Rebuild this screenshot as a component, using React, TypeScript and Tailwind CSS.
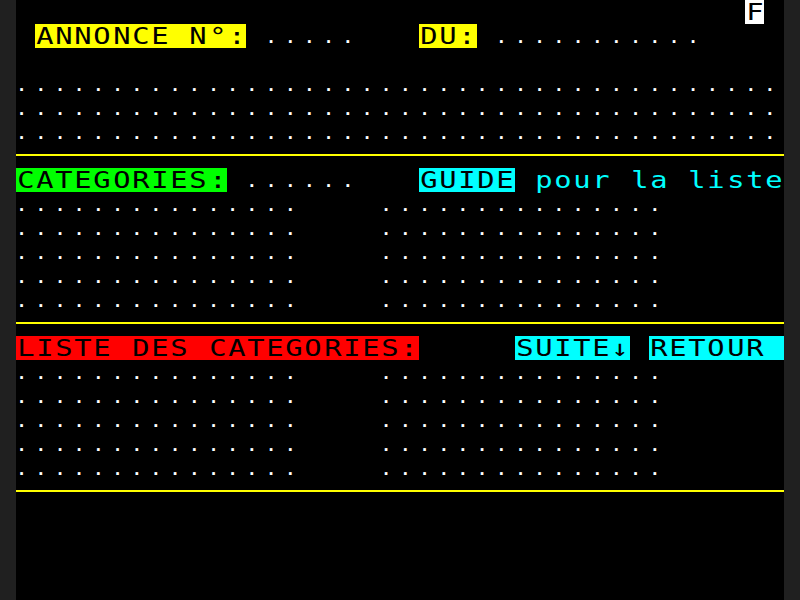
import React from "react"

type Seg = { t: string; fg?: string; bg?: string }

const Y = "bg-[#ffff00]"
const G = "bg-[#00ff00]"
const R = "bg-[#ff0000]"
const C = "bg-[#00ffff]"

const dots = (n: number) => ".".repeat(n)
const sp = (n: number) => " ".repeat(n)

// 25 rows of 40 columns, Minitel style
const rows: (Seg[] | "line")[] = [
  [{ t: sp(38) }, { t: "F", fg: "text-black", bg: "bg-white" }],
  [
    { t: " " },
    { t: "ANNONCE N°:", fg: "text-black", bg: Y },
    { t: " " },
    { t: dots(5) },
    { t: sp(3) },
    { t: "DU:", fg: "text-black", bg: Y },
    { t: " " },
    { t: dots(11) },
  ],
  [],
  [{ t: dots(40) }],
  [{ t: dots(40) }],
  [{ t: dots(40) }],
  "line",
  [
    { t: "CATEGORIES:", fg: "text-black", bg: G },
    { t: " " },
    { t: dots(6) },
    { t: sp(3) },
    { t: "GUIDE", fg: "text-black", bg: C },
    { t: " " },
    { t: "pour la liste", fg: "text-[#00ffff]" },
  ],
  [{ t: dots(15) }, { t: sp(4) }, { t: dots(15) }],
  [{ t: dots(15) }, { t: sp(4) }, { t: dots(15) }],
  [{ t: dots(15) }, { t: sp(4) }, { t: dots(15) }],
  [{ t: dots(15) }, { t: sp(4) }, { t: dots(15) }],
  [{ t: dots(15) }, { t: sp(4) }, { t: dots(15) }],
  "line",
  [
    { t: "LISTE DES CATEGORIES:", fg: "text-black", bg: R },
    { t: sp(5) },
    { t: "SUITE↓", fg: "text-black", bg: C },
    { t: " " },
    { t: "RETOUR ", fg: "text-black", bg: C },
  ],
  [{ t: dots(15) }, { t: sp(4) }, { t: dots(15) }],
  [{ t: dots(15) }, { t: sp(4) }, { t: dots(15) }],
  [{ t: dots(15) }, { t: sp(4) }, { t: dots(15) }],
  [{ t: dots(15) }, { t: sp(4) }, { t: dots(15) }],
  [{ t: dots(15) }, { t: sp(4) }, { t: dots(15) }],
  "line",
  [],
  [],
  [],
  [],
]

function Cell({ ch, fg, bg }: { ch: string; fg: string; bg: string }) {
  return (
    <span className={`flex h-[24px] w-[19.2px] shrink-0 justify-center ${fg} ${bg}`}>
      {ch === "." ? (
        <span className="inline-block -translate-x-[4px] translate-y-[2px] text-[16px] leading-[24px] font-bold">.</span>
      ) : (
        <span className="inline-block scale-x-125">{ch === " " ? "\u00a0" : ch}</span>
      )}
    </span>
  )
}

export default function App() {
  return (
    <div className="flex h-[600px] w-[800px] justify-center bg-[#202020]">
      <div className="flex h-[600px] w-[768px] flex-col bg-black font-['DejaVu_Sans_Mono',monospace] text-[23px] leading-[24px] text-white">
        {rows.map((row, i) =>
          row === "line" ? (
            <div key={i} className="h-[24px] pt-[10px]">
              <div className="h-[2px] bg-[#ffff00]" />
            </div>
          ) : (
            <div key={i} className="flex h-[24px]">
              {row.flatMap((s, j) =>
                Array.from(s.t).map((ch, k) => (
                  <Cell key={`${j}-${k}`} ch={ch} fg={s.fg ?? "text-white"} bg={s.bg ?? ""} />
                ))
              )}
            </div>
          )
        )}
      </div>
    </div>
  )
}
